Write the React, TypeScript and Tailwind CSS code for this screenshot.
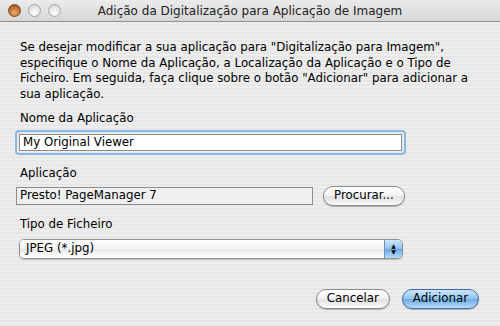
import React from "react";

const FONT = "font-['DejaVu_Sans','Liberation_Sans',sans-serif]";

function Lights() {
  return (
    <div className="flex items-center gap-[7px]">
      <span className="h-[13px] w-[13px] rounded-full border border-[#7a4a22] bg-[radial-gradient(circle_at_50%_70%,#f0b070,#b86a2c_60%,#7a3f14)]" />
      <span className="h-[13px] w-[13px] rounded-full border border-[#a9a9a9] bg-[radial-gradient(circle_at_50%_70%,#ffffff,#e4e4e4_60%,#c8c8c8)]" />
      <span className="h-[13px] w-[13px] rounded-full border border-[#a9a9a9] bg-[radial-gradient(circle_at_50%_70%,#ffffff,#e4e4e4_60%,#c8c8c8)]" />
    </div>
  );
}

function AquaButton({ label, primary }: { label: string; primary?: boolean }) {
  return (
    <button
      className={
        "flex h-[20px] items-center justify-center rounded-full border px-[10px] text-[11.8px] text-black shadow-[0_1px_1px_rgba(0,0,0,0.25)] " +
        (primary
          ? "border-[#3f6ea6] bg-[linear-gradient(#cfe6fb,#8ec2ef_50%,#6ba9e4_51%,#b5dcfb)]"
          : "border-[#8a8a8a] bg-[linear-gradient(#ffffff,#f1f1f1_50%,#e0e0e0_51%,#fbfbfb)]")
      }
    >
      {label}
    </button>
  );
}

export default function App() {
  return (
    <div className={`h-[326px] w-[500px] overflow-hidden bg-[#ececec] ${FONT} text-black`}>
      <div className="relative flex h-[22px] items-center border-b border-[#8f8f8f] bg-[linear-gradient(#ebebeb,#d6d6d6)] px-[8px]">
        <Lights />
        <div className="absolute inset-x-0 top-0 flex h-[21px] items-center justify-center text-[12px] text-[#222]">
          Adição da Digitalização para Aplicação de Imagem
        </div>
      </div>
      <div className="h-[304px] bg-[repeating-linear-gradient(#ededed_0px,#ededed_2px,#e7e7e7_2px,#e7e7e7_4px)] px-[20px] pt-[18px]">
        <p className="whitespace-nowrap text-[11.8px] leading-[15.5px]">
          Se desejar modificar a sua aplicação para "Digitalização para Imagem",
          <br />
          especifique o Nome da Aplicação, a Localização da Aplicação e o Tipo de
          <br />
          Ficheiro. Em seguida, faça clique sobre o botão "Adicionar" para adicionar a
          <br />
          sua aplicação.
        </p>
        <div className="mt-[8px] text-[11.8px] leading-[16px]">Nome da Aplicação</div>
        <div className="mt-[6px] -ml-[3px] w-[387px] rounded-[2px] p-[2px] shadow-[0_0_0_2px_#8db8e6]">
          <div className="flex h-[17px] items-center border border-[#8c8c8c] bg-white px-[3px] text-[11.8px]">
            My Original Viewer
          </div>
        </div>
        <div className="mt-[12px] text-[11.8px] leading-[16px]">Aplicação</div>
        <div className="mt-[5px] -ml-[4px] flex items-center gap-[10px]">
          <div className="flex h-[18px] w-[297px] items-center border border-[#8c8c8c] bg-[#efefef] px-[3px] text-[11.8px]">
            Presto! PageManager 7
          </div>
          <AquaButton label="Procurar..." />
        </div>
        <div className="mt-[10px] text-[11.8px] leading-[16px]">Tipo de Ficheiro</div>
        <div className="mt-[7px] -ml-[1px] flex h-[20px] w-[384px] items-stretch overflow-hidden rounded-[5px] border border-[#8f8f8f] shadow-[0_1px_1px_rgba(0,0,0,0.2)]">
          <div className="flex flex-1 items-center bg-[linear-gradient(#ffffff,#f3f3f3_50%,#e9e9e9_51%,#ffffff)] px-[6px] text-[11.8px]">
            JPEG (*.jpg)
          </div>
          <div className="flex w-[18px] flex-col items-center justify-center border-l border-[#6f93bd] bg-[linear-gradient(#cfe6fb,#8ec2ef_50%,#6ba9e4_51%,#b5dcfb)] text-[6px] leading-[6px] text-black">
            <span>▲</span>
            <span>▼</span>
          </div>
        </div>
        <div className="mt-[30px] flex justify-end gap-[12px] pr-[1px]">
          <AquaButton label="Cancelar" />
          <AquaButton label="Adicionar" primary />
        </div>
      </div>
    </div>
  );
}
